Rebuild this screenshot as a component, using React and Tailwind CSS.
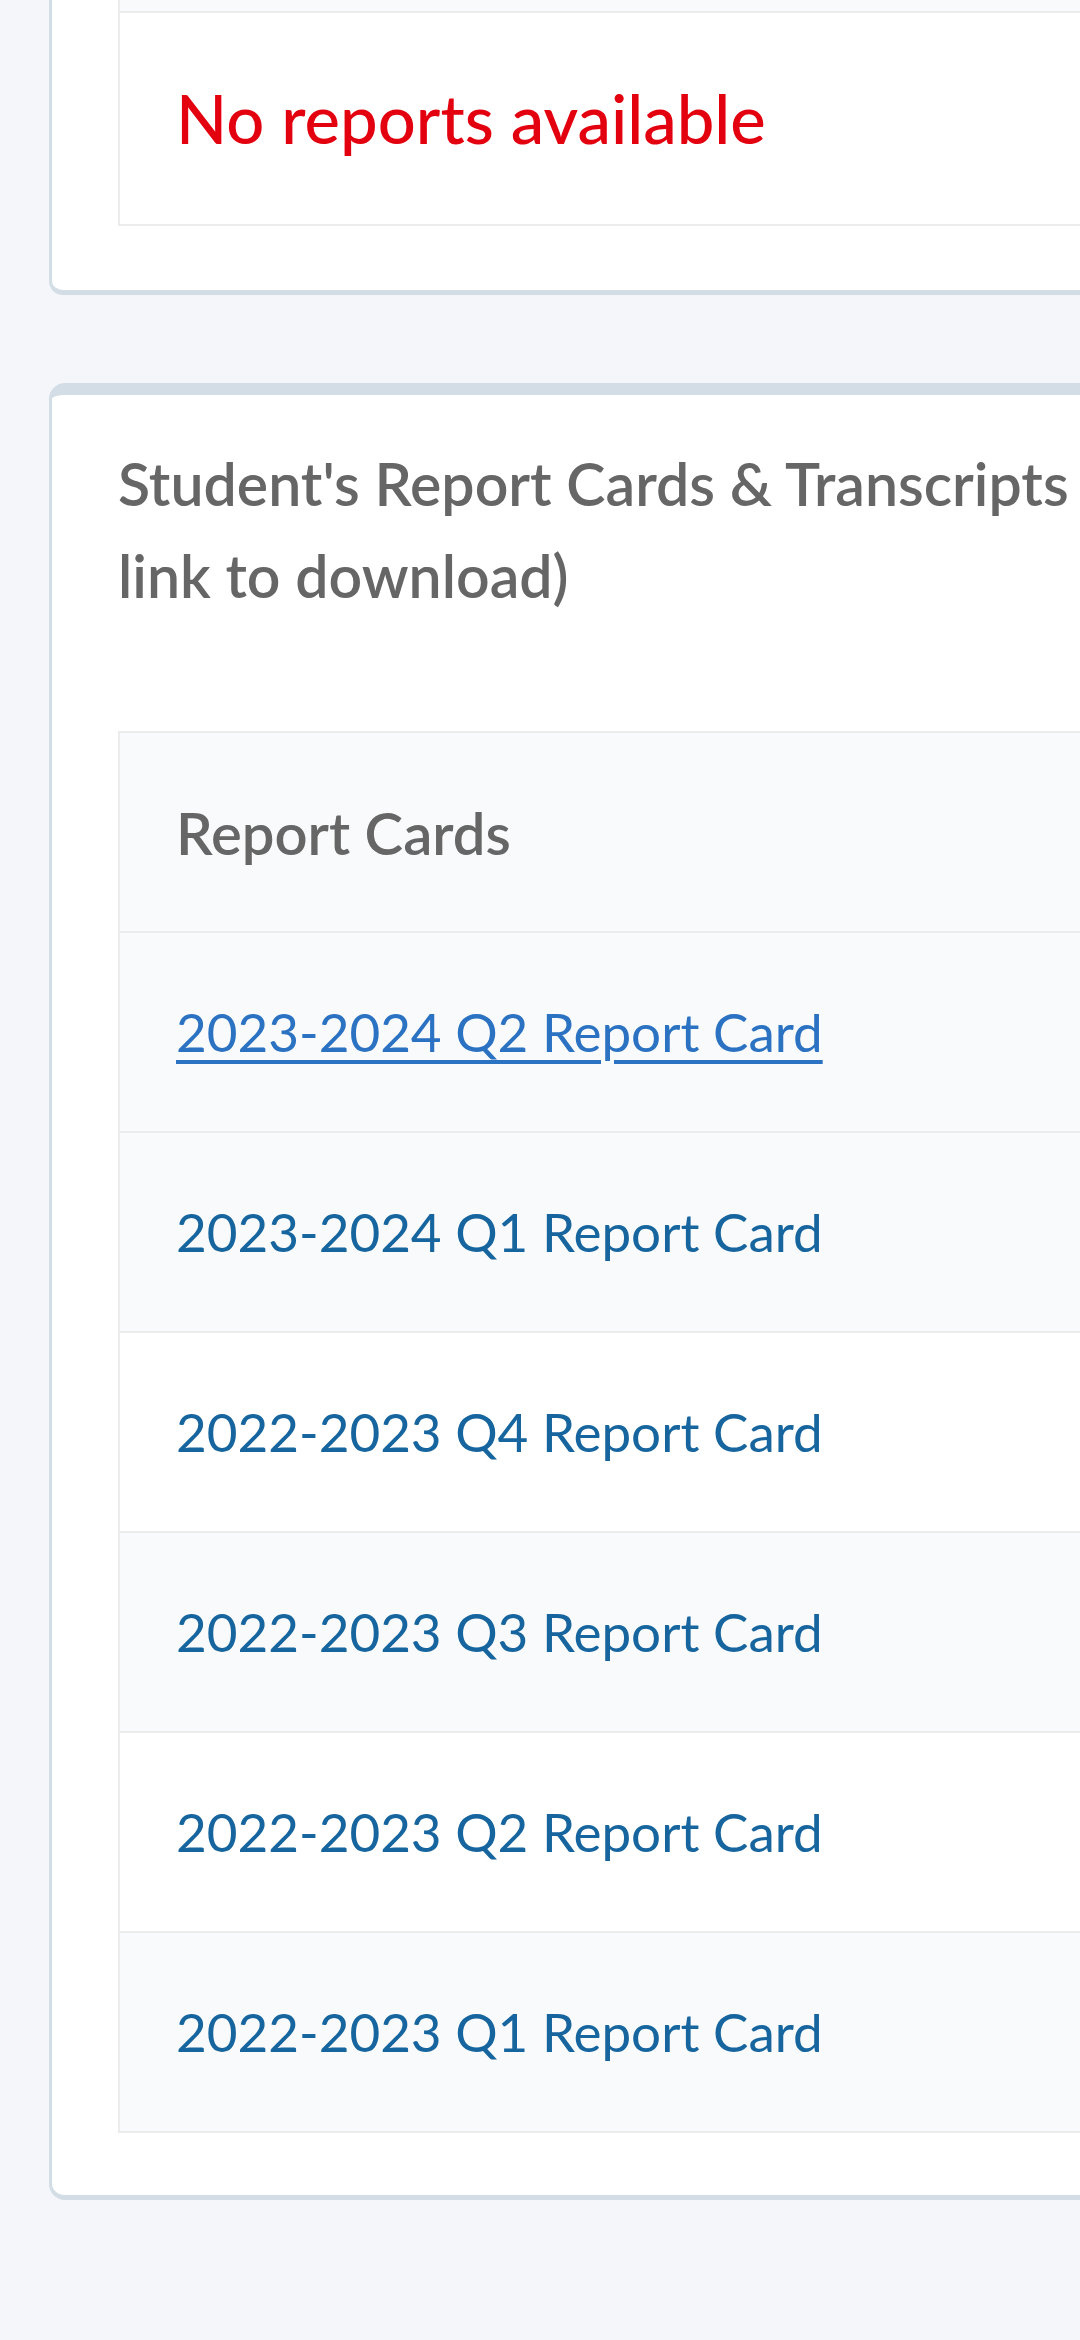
import React from 'react';

const reports = [
    { label: '2023-2024 Q2 Report Card', active: true, shaded: true },
    { label: '2023-2024 Q1 Report Card', shaded: true },
    { label: '2022-2023 Q4 Report Card' },
    { label: '2022-2023 Q3 Report Card', shaded: true },
    { label: '2022-2023 Q2 Report Card' },
    { label: '2022-2023 Q1 Report Card', shaded: true },
];

const App = () => {
    return (
        <div className="w-[1080px] h-[2340px] overflow-hidden bg-[#f4f6f9] font-['Lato',sans-serif]">
            <div className="ml-[49px] w-[1500px]">
                {/* previous card, only its bottom is on screen */}
                <div className="bg-white border-x-[3px] border-b-[5px] border-[#d3dde5] rounded-b-[14px] px-[66px] pb-[64px]">
                    <div className="border-x-2 border-b-2 border-[#ececec]">
                        <div className="h-[13px] bg-[#f9fafb] border-b-2 border-[#ececec]"></div>
                        <div className="h-[211px] flex items-center pl-[56px] text-[67px] font-medium text-[#e3000f]">
                            No reports available
                        </div>
                    </div>
                </div>

                <div className="mt-[88px] bg-white border-t-[12px] border-x-[3px] border-b-[5px] border-[#d3dde5] rounded-[16px] px-[66px] pb-[62px]">
                    <h2 className="pt-[43px] text-[59px] leading-[92px] font-semibold text-[#666666]">
                        <span className="block whitespace-nowrap">Student's Report Cards &amp; Transcripts (Click on the</span>
                        <span className="block whitespace-nowrap">link to download)</span>
                    </h2>
                    <div className="mt-[109px] border-x-2 border-t-2 border-[#ececec]">
                        <div className="h-[200px] flex items-center pl-[56px] bg-[#f9fafb] border-b-2 border-[#ececec] text-[58px] font-semibold text-[#666666]">
                            Report Cards
                        </div>
                        {reports.map((r, i) => (
                            <div
                                key={i}
                                className={`h-[200px] flex items-center pl-[56px] border-b-2 border-[#ececec] ${r.shaded ? 'bg-[#f9fafb]' : 'bg-white'}`}
                            >
                                <a
                                    href="#"
                                    className={`text-[53px] ${r.active ? 'text-[#2b72c2] underline decoration-[4px] underline-offset-[8px]' : 'text-[#17659e]'}`}
                                >
                                    {r.label}
                                </a>
                            </div>
                        ))}
                    </div>
                </div>
            </div>
        </div>
    );
};

export default App;
